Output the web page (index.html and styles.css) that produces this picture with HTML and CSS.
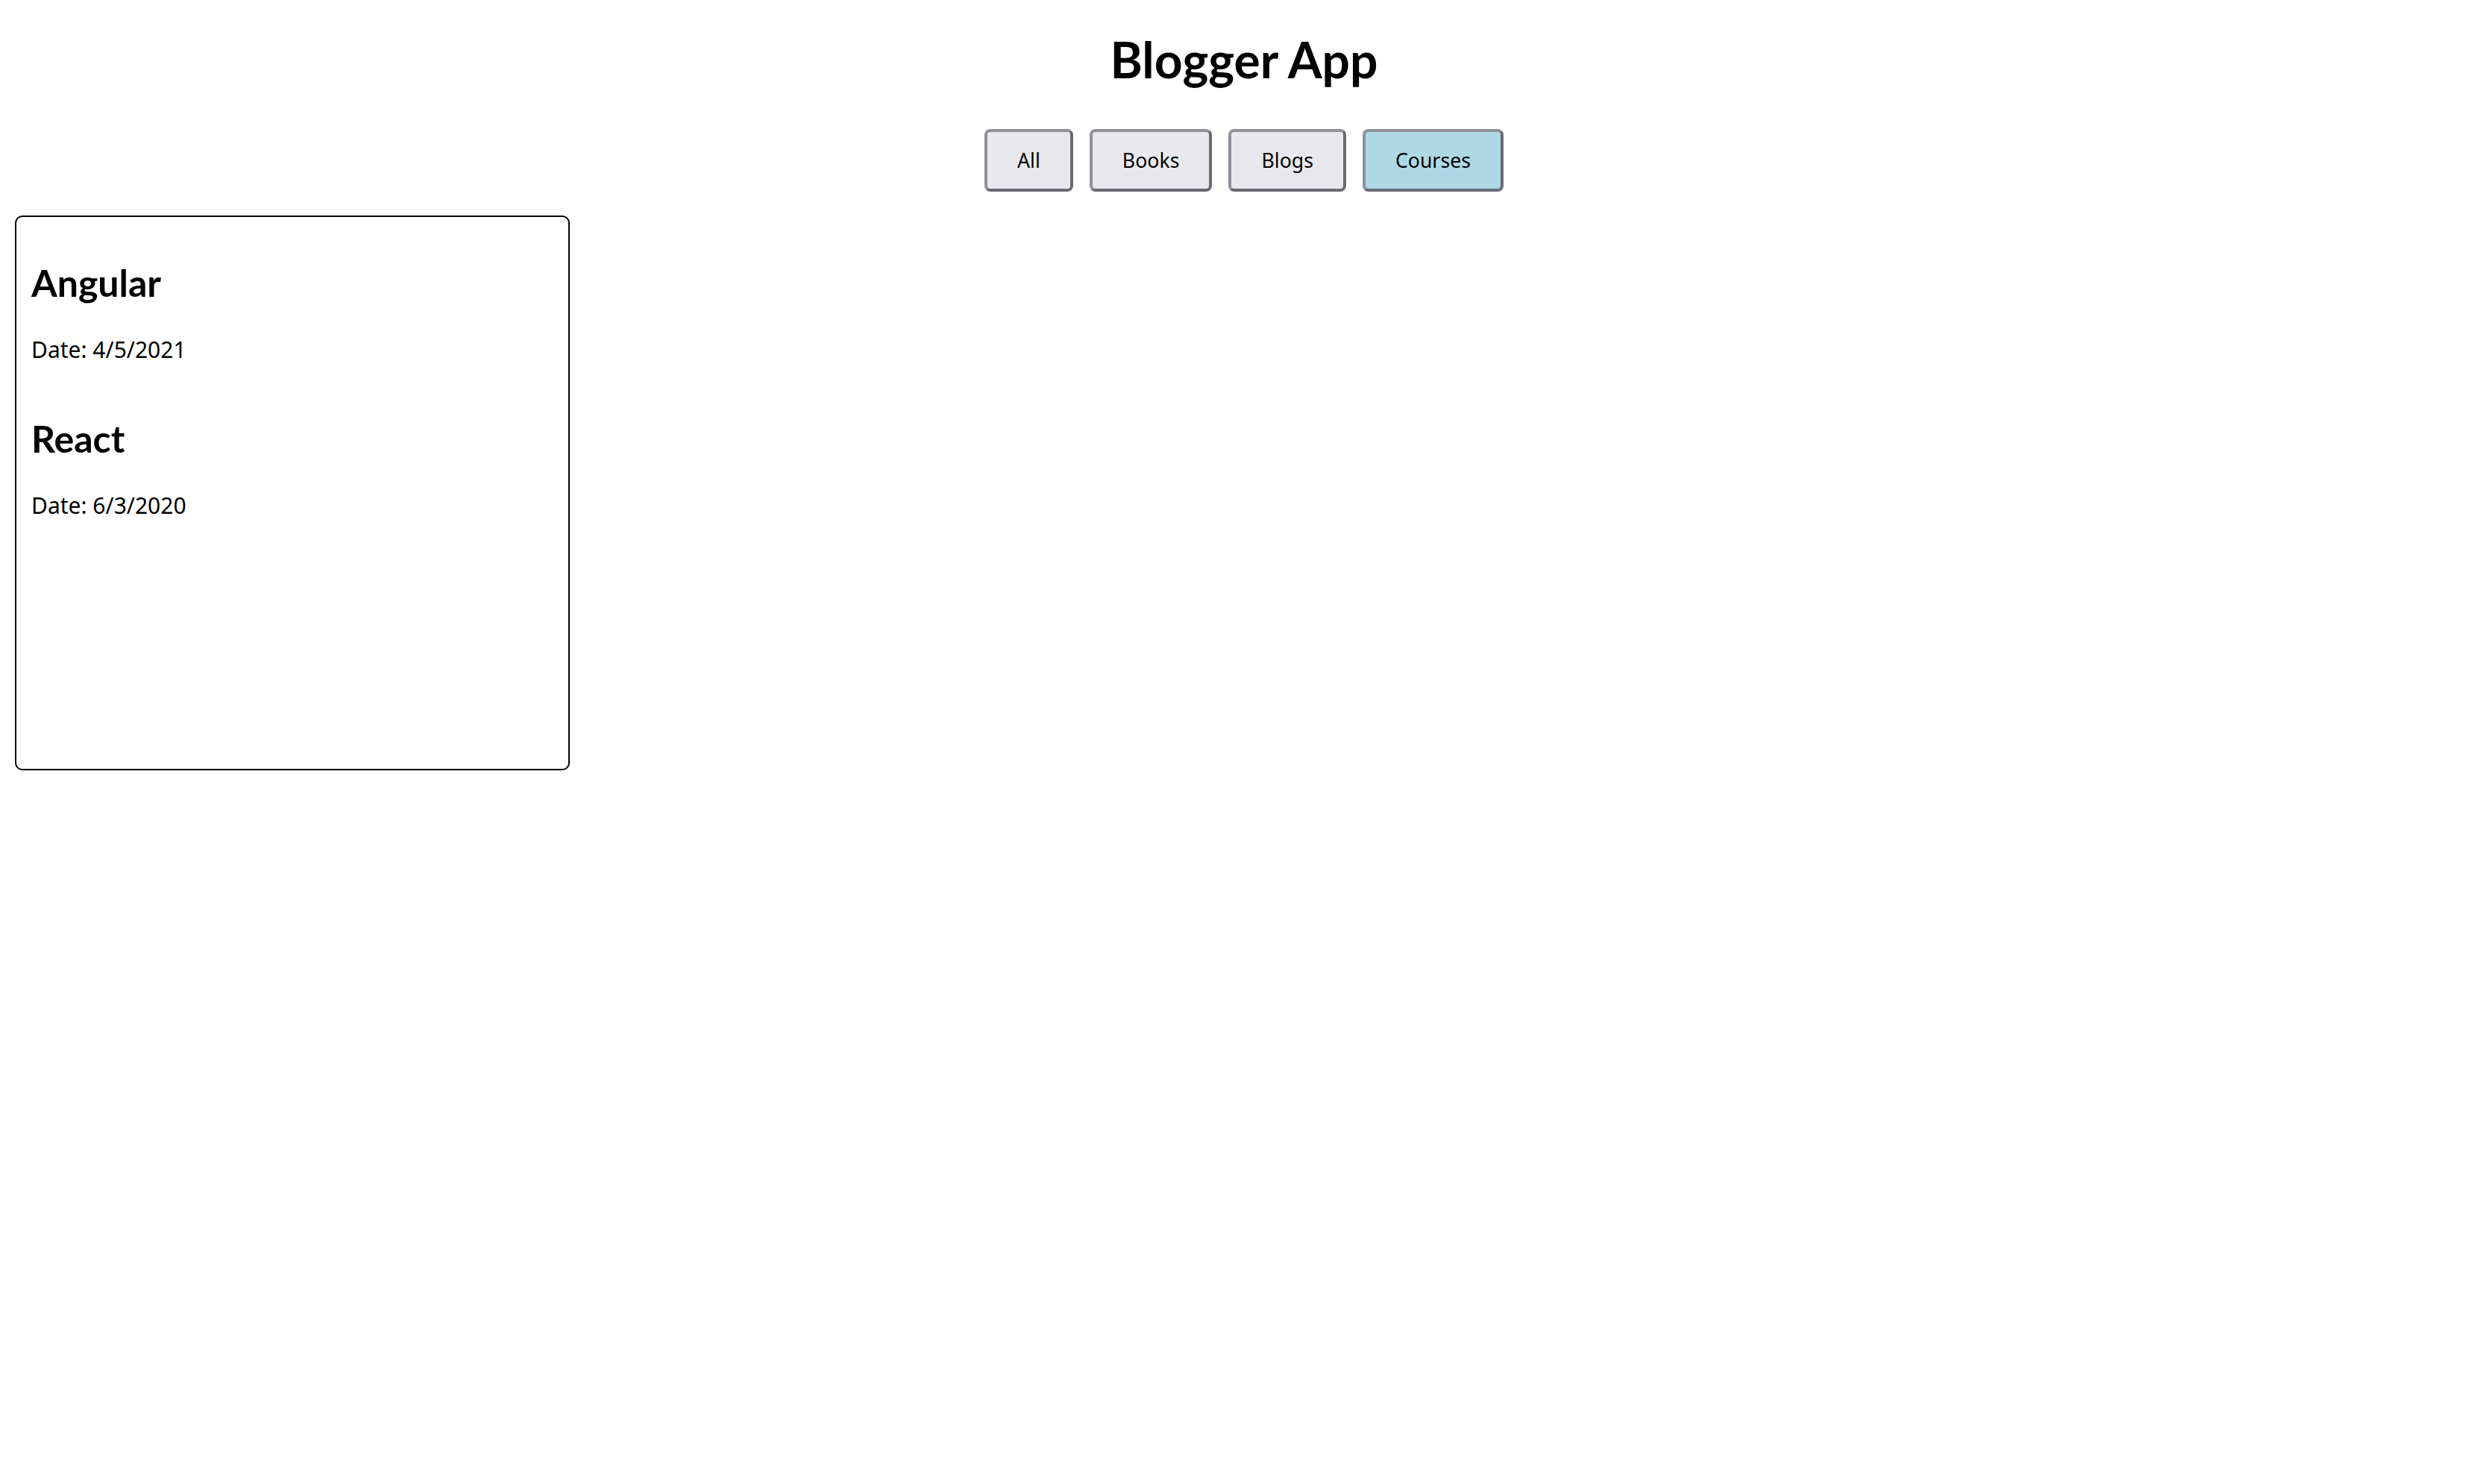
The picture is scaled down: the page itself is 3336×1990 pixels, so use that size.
FILE: index.html
```html
<!DOCTYPE html>
<html lang="en">
<head>
<meta charset="utf-8">
<title>Blogger App</title>
<link rel="stylesheet" href="styles.css">
</head>
<body>
<div class="app">
  <h1 class="title">Blogger App</h1>
  <div class="filters">
    <button class="filter-btn">All</button>
    <button class="filter-btn">Books</button>
    <button class="filter-btn">Blogs</button>
    <button class="filter-btn is-active">Courses</button>
  </div>
  <div class="card">
    <div class="item">
      <h2 class="item-title">Angular</h2>
      <p class="item-date">Date: 4/5/2021</p>
    </div>
    <div class="item">
      <h2 class="item-title">React</h2>
      <p class="item-date">Date: 6/3/2020</p>
    </div>
  </div>
</div>
</body>
</html>
```

FILE: styles.css
```css
html, body {
  margin: 0;
  padding: 0;
  background: #ffffff;
}

body {
  font-family: "Noto Sans", "Lato", sans-serif;
  color: #000000;
}

.app {
  padding: 0 20px;
}

.title {
  margin: 40px 0 54px;
  font-family: "Lato", "Noto Sans", sans-serif;
  font-size: 66px;
  font-weight: 700;
  line-height: 1.2;
  text-align: center;
}

.filters {
  display: flex;
  justify-content: center;
  gap: 22px;
}

.filter-btn {
  font-family: "Noto Sans", "Lato", sans-serif;
  font-size: 26.67px;
  line-height: 36px;
  color: #000000;
  padding: 20px 40px;
  background: #e9e9ed;
  border: 4px solid;
  border-color: #8f8f9d #6a6a73 #6a6a73 #8f8f9d;
  border-radius: 8px;
}

.filter-btn.is-active {
  background: #add8e6;
}

.card {
  display: flex;
  flex-direction: column;
  box-sizing: border-box;
  width: 744px;
  height: 744px;
  margin-top: 32px;
  padding: 20px;
  border: 2px solid #000000;
  border-radius: 10px;
}

.item-title {
  margin: 38px 0 42px;
  font-family: "Lato", "Noto Sans", sans-serif;
  font-size: 50px;
  font-weight: 700;
  line-height: 60px;
}

.item-date {
  margin: 0 0 33px;
  font-size: 30px;
  line-height: 36px;
}
```
